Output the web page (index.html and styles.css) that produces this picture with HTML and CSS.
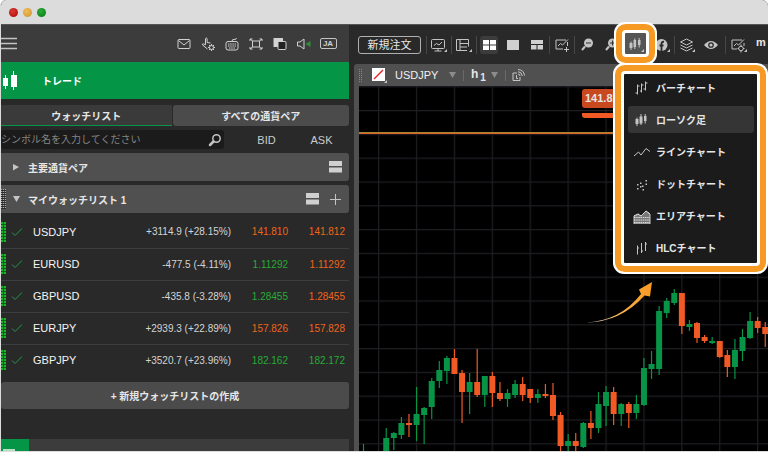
FILE: index.html
```html
<!DOCTYPE html>
<html lang="ja">
<head>
  <meta charset="UTF-8">
  <title>トレード</title>
  <meta name="viewport" content="width=device-width, initial-scale=1.0">
  <link rel="stylesheet" href="styles.css">
</head>
<body>
  <div class="window">
    <!-- Title bar -->
    <div class="titlebar">
      <span class="dot red"></span>
      <span class="dot yellow"></span>
      <span class="dot green"></span>
    </div>

    <div class="main">
      <!-- Left side: watchlist -->
      <aside class="sidebar">
        <div class="side-header">
          <button class="icon-btn menu-btn" aria-label="メニュー">
            <svg width="17" height="13" stroke="#c4c4c4" stroke-width="1.5"><path d="M0 1.5h16M0 6.5h16M0 11.5h16"/></svg>
          </button>
          <div class="side-tools">
            <button class="icon-btn" aria-label="メール">
              <svg width="16" height="16" viewBox="0 0 16 16"><rect x="2" y="3.5" width="12" height="9" rx="1"/><path d="M2.500 4.500L8 9l5.500-4.500"/></svg>
            </button>
            <button class="icon-btn" aria-label="ワンクリック設定">
              <svg width="16" height="16" viewBox="0 0 16 16"><path d="M7.500 13L2.500 9q-.6-1 .7-1.200l2.300 1V2.500q.8-1.300 1.600 0V6.500L10.500 7"/><circle cx="11.500" cy="11.500" r="2"/><path d="M11.500 8v1.500M11.500 13.500V15M8 11.500h1.500M13.500 11.500H15M9 9l1 1M13 13l1 1M14 9l-1 1M10 13l-1 1"/></svg>
            </button>
            <button class="icon-btn" aria-label="キーボード">
              <svg width="16" height="16" viewBox="0 0 16 16"><rect x="2" y="5.500" width="12" height="8.500" rx="2"/><path d="M8 5.500Q8 3 10 3.500T12.500 2"/><path d="M4 8h8M4 10h8M5 12h6" stroke-dasharray="1.500 .7"/></svg>
            </button>
            <button class="icon-btn" aria-label="全画面">
              <svg width="16" height="16" viewBox="0 0 16 16"><rect x="4.500" y="5" width="7" height="6"/><path d="M2 5V3h2.500M11.500 3H14v2M14 11v2h-2.500M4.500 13H2v-2M2 3l2.500 2M14 3l-2.500 2M2 13l2.500-2M14 13l-2.500-2"/></svg>
            </button>
            <button class="icon-btn" aria-label="テーマ">
              <svg width="16" height="16" viewBox="0 0 16 16"><rect x="2" y="2.500" width="8.500" height="8" fill="#d4d4d4"/><rect x="6" y="5.500" width="8" height="8" rx="1" fill="#222"/></svg>
            </button>
            <button class="icon-btn" aria-label="サウンド">
              <svg width="16" height="16" viewBox="0 0 16 16"><path d="M1.500 6v4H4l4 3V3L4 6z"/><path d="M14.500 5v6L9.500 8z" fill="#2f8f3c" stroke="none"/></svg>
            </button>
            <button class="icon-btn lang-btn" aria-label="言語"><span>JA</span></button>
          </div>
        </div>

        <div class="trade-bar">
          <svg width="16" height="20" fill="#fff"><path d="M2 7h2V4h1v3h2v8H5v3H4v-3H2zM10 4h2V0h1v4h3v12h-3v3h-1v-3h-2z"/></svg>
          <h1>トレード</h1>
        </div>

        <div class="tabs">
          <button class="tab active">ウォッチリスト</button>
          <button class="tab">すべての通貨ペア</button>
        </div>

        <div class="search-row">
          <label class="search">
            <input type="text" placeholder="シンボル名を入力してください" aria-label="シンボル検索">
            <svg width="14" height="14" fill="none" stroke="#d0d0d0"><circle cx="8.500" cy="5.500" r="3.700" stroke-width="1.500"/><path d="M5.500 8.500L2 12" stroke-width="2.500" stroke-linecap="round"/></svg>
          </label>
          <span class="col-title">BID</span>
          <span class="col-title">ASK</span>
        </div>

        <div class="group">
          <svg class="tri" width="8" height="8"><path d="M1 1l6 3-6 3.500z"/></svg>
          <span class="group-name">主要通貨ペア</span>
          <button class="icon-btn small" aria-label="表示切替"><svg width="13" height="12" class="solid"><path d="M0 0h13v5H0zM0 6.500h13v5H0z"/></svg></button>
        </div>
        <div class="group handle-row">
          <svg class="tri" width="8" height="8"><path d="M1 1h7L4.500 7z"/></svg>
          <span class="group-name">マイウォッチリスト 1</span>
          <button class="icon-btn small" aria-label="表示切替"><svg width="13" height="12" class="solid"><path d="M0 0h13v5H0zM0 6.500h13v5H0z"/></svg></button>
          <button class="icon-btn small" aria-label="追加"><svg width="11" height="11"><path d="M0 5.500h11M5.500 0v11"/></svg></button>
        </div>

        <table class="quotes">
          <tbody id="quotes"></tbody>
        </table>

        <button class="new-list">+ 新規ウォッチリストの作成</button>

        <div class="side-footer">
          <div class="footer-icon"><svg width="12" height="3"><path d="M0 2h12" stroke="#b8e0c4" stroke-width="2"/></svg></div>
        </div>
      </aside>

      <!-- Right side: toolbar and chart -->
      <section class="workspace">
        <div class="toolbar">
          <button class="order-btn">新規注文</button>
          <i class="sep"></i>
          <button class="icon-btn" aria-label="ワークスペース">
            <svg width="18" height="16" viewBox="0 0 18 16"><rect x="1.500" y="2.500" width="13" height="9" rx="1"/><path d="M4 8.500l2.500-2L9 8l3-3M8 11.500V14M4.500 14h7"/><path class="corner" d="M17 12v3h-3z"/></svg>
          </button>
          <i class="sep"></i>
          <button class="icon-btn" aria-label="レイアウト">
            <svg width="18" height="16" viewBox="0 0 18 16"><path d="M13.500 9.500v-7h-12v11H12M5 2.500v11M5 6.500h8.500M5 10h7"/><path class="corner" d="M17 12v3h-3z"/></svg>
          </button>
          <i class="sep"></i>
          <button class="icon-btn on" aria-label="4分割"><svg width="13" height="10" fill="#fff" class="solid"><path d="M0 0h6v4.500H0zM7 0h6v4.500H7zM0 5.500h6V10H0zM7 5.500h6V10H7z"/></svg></button>
          <button class="icon-btn" aria-label="1画面"><svg width="12" height="10" class="solid"><path d="M0 0h12v10H0z"/></svg></button>
          <button class="icon-btn" aria-label="3分割"><svg width="12" height="10" class="solid"><path d="M0 0h12v4H0zM0 5h5.500v4.500H0zM6.500 5H12v4.500H6.500z"/></svg></button>
          <i class="sep"></i>
          <button class="icon-btn" aria-label="チャート追加">
            <svg width="16" height="16" viewBox="0 0 16 16"><path d="M12 3H2v9h7M13.500 5v4M4 9l2.500-2.500L8.500 8l5.500-5.500M12.500 10v5M10 12.500h5"/></svg>
          </button>
          <i class="sep"></i>
          <button class="icon-btn" aria-label="縮小">
            <svg width="14" height="14"><circle cx="8.500" cy="5" r="4.500" fill="#c4c4c4" stroke="none"/><path d="M5 8.500L2 12" stroke-width="2"/><path d="M6 5h5" stroke="#333"/></svg>
          </button>
          <button class="icon-btn" aria-label="拡大">
            <svg width="14" height="14"><circle cx="8.500" cy="5" r="4.500" fill="#c4c4c4" stroke="none"/><path d="M5 8.500L2 12" stroke-width="2"/><path d="M6 5h5M8.500 2.500v5" stroke="#333"/></svg>
          </button>

          <!-- Chart type button with its open menu -->
          <div class="chart-type">
            <button class="icon-btn type-btn" aria-label="チャートタイプ">
              <svg width="18" height="16" viewBox="0 0 18 16"><path class="bars" d="M2.500 7h3v5h-3zM6.500 4h2.600v7H6.500zM11 4h2.500v5H11z"/><path d="M4 5.500V14M7.800 2.500V13M12.200 2V11.500"/><path class="corner" d="M17 13v3h-3z"/></svg>
            </button>
            <ul class="type-menu">
              <li><button><svg width="18" height="16" viewBox="0 0 18 16"><path d="M4.500 4.500v10M2.500 13h2M4.500 6h2M8.500 3.500v9M7 11h1.500M12.500 1.500v9M8.500 5h2M10.500 9h2M12.500 3h2"/></svg>バーチャート</button></li>
              <li><button class="selected"><svg width="18" height="16" viewBox="0 0 18 16"><path class="bars" d="M2.500 7h3v5h-3zM6.500 4.500h3v7h-3zM11 4h2.500v5H11z"/><path d="M4 5.500V14M8 2V13M12.200 2V11.500"/></svg>ローソク足</button></li>
              <li><button><svg width="18" height="16" viewBox="0 0 18 16"><path d="M1 12l4.500-4L8 11l5-6.500 4 3"/></svg>ラインチャート</button></li>
              <li><button><svg width="18" height="16" viewBox="0 0 18 16"><path class="bars" d="M4 8h1.500v1.500H4zM7 6.500h1.500V8H7zM9 9.500h1.500V11H9zM4 12h1.500v1.500H4zM7 10h1.500v1.500H7zM9.500 13H11v1.500H9.500zM12.500 7.500H14V9h-1.500zM12.500 4H14v1.500h-1.500z"/></svg>ドットチャート</button></li>
              <li><button><svg width="18" height="16" viewBox="0 0 18 16"><path fill="#777" d="M1 8l4-2 3 2 5-5 4 3v10H1z"/><path stroke="#ddd" d="M1 8l4-2 3 2 5-5 4 3M1 9.500h16M1 12h16M1 14.500h16" stroke-dasharray="1.500 .7"/></svg>エリアチャート</button></li>
              <li><button><svg width="18" height="16" viewBox="0 0 18 16"><path d="M4.500 5.500v9M8.500 3v10M12.500 2v9M4.500 8h1.500M8.500 11h1.500M12.500 4h1.500"/></svg>HLCチャート</button></li>
            </ul>
          </div>

          <button class="icon-btn" aria-label="Facebook">
            <svg width="16" height="16" viewBox="0 0 16 16"><circle cx="7.500" cy="8" r="6" fill="#c4c4c4" stroke="none"/><path d="M7.500 14V7q0-2.500 2.500-2.200M5.500 8.500h4" stroke="#2a2a2a" stroke-width="1.800"/><path class="corner" d="M16 12v3h-3z"/></svg>
          </button>
          <i class="sep"></i>
          <button class="icon-btn" aria-label="レイヤー">
            <svg width="18" height="16" viewBox="0 0 18 16"><path d="M8.500 2l6 3-6 3-6-3zM2.500 8l6 3 6-3M2.500 11l6 3 6-3"/><path class="corner" d="M17 12v3h-3z"/></svg>
          </button>
          <button class="icon-btn" aria-label="表示">
            <svg width="16" height="16" viewBox="0 0 16 16"><path d="M1 8q7-8 14 0-7 8-14 0z" fill="#c4c4c4" stroke="none"/><circle cx="8" cy="8" r="2.200" fill="#c4c4c4" stroke="#2a2a2a" stroke-width="1.300"/></svg>
          </button>
          <i class="sep wide"></i>
          <button class="icon-btn" aria-label="チャート設定">
            <svg width="18" height="16" viewBox="0 0 18 16"><path d="M12 3H2v9h5M4 9l2.500-2.500L8.500 8l5.500-5.500"/><circle cx="11" cy="11.500" r="2.300"/><path d="M11 7.500v2M11 13.500v2M7.500 11.500h1.500M13 11.500h1.500M14 6v3"/><path class="corner" d="M17 12v3h-3z"/></svg>
          </button>
          <button class="icon-btn m-btn" aria-label="分足">m</button>
        </div>

        <div class="chart-panel">
          <div class="chart-header">
            <span class="grip"></span>
            <button class="icon-btn color-btn" aria-label="リンクカラー"><svg width="15" height="15"><path d="M0 0h13v13H0z" fill="#fff" stroke="none"/><path d="M2 11l9-9" stroke="#e3262b" stroke-width="1.500"/><path class="corner" d="M15 12v3h-3z"/></svg></button>
            <select class="symbol-select" aria-label="シンボル"><option>USDJPY</option></select>
            <svg class="caret" width="7" height="7"><path d="M0 0h7L3.500 6z"/></svg>
            <i class="sep"></i>
            <button class="period-btn">h<sub>1</sub></button>
            <svg class="caret" width="7" height="7"><path d="M0 0h7L3.500 6z"/></svg>
            <i class="sep"></i>
            <button class="icon-btn" aria-label="共有"><svg width="13" height="14"><path d="M5 5H1v7.500h7V9M4.500 7v3.500h1.500M6 6q2 0 2 2M6 3.700q4 .3 4.300 4.300M6 1.500q6 .5 6.500 6"/></svg></button>
          </div>
          <div class="chart">
            <svg id="chart" width="100%" height="100%">
              <defs>
                <pattern id="grid" x="19" y="24" width="37.9" height="23.8" patternUnits="userSpaceOnUse">
                  <path d="M0 .5h38M.5 0v24" stroke="#1d1d22" stroke-width="1.500"/>
                </pattern>
              </defs>
              <rect width="100%" height="100%" fill="url(#grid)"/>
              <rect y="46" width="100%" height="1" fill="#a9852c"/>
              <rect y="47" width="100%" height="1" fill="#d9632a"/>
            </svg>
            <div class="price-tag"><span>141.810</span></div>
            <svg class="arrow" width="68" height="42">
              <defs>
                <linearGradient id="fade"><stop offset="0" stop-color="#fff"/><stop offset=".5" stop-color="#f8b04c"/><stop offset="1" stop-color="#f69a23"/></linearGradient>
              </defs>
              <path fill="url(#fade)" d="M0 40.500Q34 39 55 12L53 7.500 66 0 64 14.500 58.500 13.500Q35 40 0 40.500z"/>
            </svg>
          </div>
        </div>
      </section>
    </div>
  </div>

  <script src="app.js"></script>
</body>
</html>
```

FILE: styles.css
```css
/* ===== Base ===== */
* {
  margin: 0;
  padding: 0;
  box-sizing: border-box;
}
html, body {
  height: 100%;
  overflow: hidden;
}
body {
  background: #fff;
  color: #e6e6e6;
  font-family: "Liberation Sans", "Noto Sans CJK JP", sans-serif;
  font-size: 10px;
}
button, input, select {
  font: inherit;
  color: inherit;
  background: none;
  border: none;
  outline: none;
}
svg {
  display: block;
  fill: none;
  stroke: #c4c4c4;
}
svg.solid {
  fill: #d0d0d0;
  stroke: none;
}
.corner, .bars {
  fill: #c4c4c4;
  stroke: none;
}

/* ===== Window ===== */
.window {
  height: 100%;
  display: flex;
  flex-direction: column;
  border: 1px solid #dcdcdc;
  border-top: none;
  border-right: none;
  border-radius: 6px 6px 0 0;
  overflow: hidden;
  background: #292929;
}
.titlebar {
  flex: none;
  height: 25px;
  display: flex;
  align-items: center;
  gap: 5px;
  padding-left: 8px;
  background: #dcdcdc;
  border-bottom: 1px solid #555;
}
.dot {
  width: 9px;
  height: 9px;
  border-radius: 50%;
}
.dot.red { background: radial-gradient(circle at 40% 35%, #dd3a30, #a80a08); }
.dot.yellow { background: radial-gradient(circle at 40% 35%, #f1bc58, #cc942f); }
.dot.green { background: radial-gradient(circle at 40% 35%, #2cab35, #077a15); }
.main {
  flex: 1;
  display: flex;
  min-height: 0;
}

/* ===== Sidebar ===== */
.sidebar {
  width: 348px;
  flex: none;
  display: flex;
  flex-direction: column;
}
.sidebar > * {
  flex: none;
}
.icon-btn {
  width: 24px;
  height: 24px;
  display: flex;
  align-items: center;
  justify-content: center;
  flex: none;
}
.side-header {
  height: 37px;
  display: flex;
  align-items: center;
  justify-content: space-between;
  padding-right: 9px;
  background: #3c3c3c;
}
.menu-btn {
  width: 17px;
}
.side-tools {
  display: flex;
}
.side-tools svg {
  stroke: #d0d0d0;
}
.lang-btn span {
  width: 17px;
  height: 11px;
  border: 1px solid #c4c4c4;
  border-radius: 2px;
  color: #d0d0d0;
  font-size: 8px;
  font-weight: bold;
  line-height: 9px;
  text-align: center;
}
.trade-bar {
  height: 37px;
  display: flex;
  align-items: center;
  gap: 25px;
  background: #049547;
}
.trade-bar svg {
  stroke: none;
  fill: #fff;
}
.trade-bar h1 {
  font-size: 10px;
  font-weight: bold;
  color: #fff;
}
.tabs {
  display: flex;
  gap: 1px;
  margin-top: 6px;
}
.tab {
  flex: 1;
  height: 21px;
  background: #4b4b4b;
  border-radius: 3px;
  font-weight: bold;
}
.tab.active {
  flex: 0 0 49%;
  background: #3a3a3a;
  border-bottom: 1px solid #049547;
  border-radius: 0;
}
.search-row {
  height: 27px;
  display: flex;
  align-items: center;
}
.search {
  flex: 1;
  height: 19px;
  display: flex;
  align-items: center;
  padding-right: 2px;
  margin-right: 15px;
  background: #1b1b1b;
  border-radius: 3px;
}
.search input {
  flex: 1;
  min-width: 0;
}
.search input::placeholder {
  color: #858585;
}
.col-title {
  width: 55px;
  color: #ccc;
  font-size: 11px;
  text-align: center;
}

/* ===== Groups ===== */
.group {
  height: 28px;
  display: flex;
  align-items: center;
  padding: 0 7px 0 11px;
  margin-bottom: 4px;
  background: #505050;
  border-radius: 0 3px 3px 0;
  font-weight: bold;
}
.handle-row::before, .quotes .grab::before {
  content: "";
  display: block;
  width: 5px;
  height: 20px;
  background: repeating-linear-gradient(#0000 0 1px, #2b2b2b 1px 2px), repeating-linear-gradient(90deg, #aaa 0 1px, #505050 1px 2px);
}
.handle-row {
  padding-left: 0;
}
.handle-row .tri {
  margin-left: 6px;
}
.tri {
  fill: #c4c4c4;
  stroke: none;
}
.group-name {
  flex: 1;
  margin-left: 8px;
}
.icon-btn.small {
  width: 13px;
}
.icon-btn.small + .icon-btn.small {
  margin-left: 10px;
}

/* ===== Quotes ===== */
.quotes {
  width: 100%;
  border-collapse: collapse;
  margin-top: -1px;
}
.quotes td {
  height: 32px;
  border-bottom: 1px solid #3e3e3e;
  text-align: right;
}
.quotes tr:last-child td {
  border-bottom: none;
}
.quotes .grab {
  width: 10px;
}
.quotes .grab::before {
  background: repeating-linear-gradient(#0000 0 2px, #0b5c14 2px 3px), repeating-linear-gradient(90deg, #17b52a 0 2px, #0b5c14 2px 3px);
}
.quotes .check {
  width: 22px;
}
.quotes .check svg {
  stroke: #1f9a4b;
}
.quotes .symbol {
  text-align: left;
  font-size: 11px;
  color: #f4f4f4;
}
.quotes .change {
  color: #d4d4d4;
}
.quotes .price {
  width: 57px;
}
.quotes .price:last-child {
  width: 61px;
  padding-right: 4px;
}
.quotes .up { color: #27ab36; }
.quotes .down { color: #f0641a; }
.new-list {
  height: 27px;
  margin-top: 6px;
  background: #4b4b4b;
  border-radius: 3px;
  font-weight: bold;
}
.sidebar .side-footer {
  margin-top: auto;
  height: 12px;
  background: #3c3c3c;
}
.footer-icon {
  width: 28px;
  height: 12px;
  padding: 9px 0 0 2px;
  background: #049547;
}

/* ===== Workspace ===== */
.workspace {
  flex: 1;
  min-width: 0;
  display: flex;
  flex-direction: column;
  padding-left: 5px;
}
.toolbar {
  height: 39px;
  flex: none;
  display: flex;
  align-items: center;
  padding-left: 4px;
}
.order-btn {
  flex: none;
  width: 63px;
  height: 18px;
  margin-right: 5px;
  border: 1px solid #b0b0b0;
  border-radius: 3px;
  font-size: 11px;
  line-height: 16px;
}
.sep {
  flex: none;
  width: 1px;
  height: 18px;
  background: #474747;
}
.sep.wide {
  margin: 0 1px 0 2px;
}
.icon-btn.on {
  height: 18px;
  width: 18px;
  margin: 0 3px;
  background: #3c3c3c;
  border-radius: 3px;
}
.on svg.solid {
  fill: #fff;
}
.m-btn {
  width: 20px;
  padding-bottom: 5px;
  font-weight: bold;
  font-size: 11px;
}

/* ===== Chart type menu ===== */
.chart-type {
  position: relative;
  flex: none;
  width: 27px;
  height: 100%;
  z-index: 2;
}
.type-btn {
  position: absolute;
  top: 5px;
  left: -1px;
  width: 27px;
  height: 27px;
  background: #555;
}
.type-btn, .type-menu {
  border: 3px solid #fff;
  border-radius: 4px;
  box-shadow: 0 0 0 6px #f69a23, 0 0 0 8px #fff;
}
.type-menu {
  position: absolute;
  top: 46px;
  left: -2px;
  width: 139px;
  padding: 0 3px 0 4px;
  background: #1b1b1b;
  list-style: none;
}
.type-menu li {
  height: 32px;
}
.type-menu li:last-child {
  height: 29px;
}
.type-menu button {
  display: flex;
  align-items: center;
  gap: 5px;
  width: 100%;
  height: 27px;
  padding-left: 5px;
  border-radius: 3px;
  font-weight: bold;
}
.type-menu .selected {
  background: #353535;
}

/* ===== Chart ===== */
.chart-panel {
  flex: 1;
  min-height: 0;
  display: flex;
  flex-direction: column;
  padding-left: 5px;
  background: #505050;
  border-radius: 3px 0 0 0;
}
.chart-header {
  height: 22px;
  flex: none;
  display: flex;
  align-items: center;
}
.grip {
  width: 4px;
  height: 13px;
  margin-right: 4px;
  background: repeating-linear-gradient(#0000 0 1px, #505050 1px 2px), repeating-linear-gradient(90deg, #888 0 1px, #505050 1px 2px);
}
.symbol-select {
  width: 54px;
  margin-left: 4px;
  appearance: none;
  font-size: 11px;
  color: #f0f0f0;
}
.caret {
  fill: #8c8c8c;
  stroke: none;
}
.chart-header .sep {
  margin-left: 7px;
  height: 11px;
  background: #6a6a6a;
}
.period-btn {
  width: 27px;
  padding-left: 7px;
  text-align: left;
  font-size: 12px;
  font-weight: bold;
}
.period-btn sub {
  margin-left: 2px;
  font-size: 10px;
}
.chart {
  position: relative;
  flex: 1;
  min-height: 0;
  background: #000;
  overflow: hidden;
}
.chart svg {
  stroke: none;
}
.price-tag {
  position: absolute;
  top: 3px;
  left: 223px;
  width: 60px;
  border-bottom: 5px solid #f15a24;
  border-radius: 0 0 3px 3px;
}
.price-tag span {
  display: block;
  width: 54px;
  height: 19px;
  margin-bottom: 5px;
  padding-left: 3px;
  background: #c8491f;
  border-radius: 3px;
  font-size: 11px;
  font-weight: bold;
  line-height: 19px;
}
.arrow {
  position: absolute;
  top: 196px;
  left: 227px;
}
```

FILE: app.js
```javascript
// Watchlist rows: symbol, change, bid, bid class, ask, ask class
const quotes = [
  ["USDJPY", "+3114.9 (+28.15%)", "141.810", "down", "141.812", "down"],
  ["EURUSD", "-477.5 (-4.11%)", "1.11292", "up", "1.11292", "down"],
  ["GBPUSD", "-435.8 (-3.28%)", "1.28455", "up", "1.28455", "down"],
  ["EURJPY", "+2939.3 (+22.89%)", "157.826", "down", "157.828", "down"],
  ["GBPJPY", "+3520.7 (+23.96%)", "182.162", "up", "182.172", "up"]
];

document.getElementById("quotes").innerHTML = quotes.map(q => `
  <tr>
    <td class="grab"></td>
    <td class="check"><svg width="12" height="10"><path d="M1 5.500l3 3 7-7"/></svg></td>
    <td class="symbol">${q[0]}</td>
    <td class="change">${q[1]}</td>
    <td class="price ${q[3]}">${q[2]}</td>
    <td class="price ${q[5]}">${q[4]}</td>
  </tr>`).join("");

// Candles: slot, high, body top, body bottom, low, rising (1) or falling (0)
const candles = [
  [0, 358, 370, 376, 380, 1], [3, 342, 352, 376, 380, 1], [4, 346, 347, 352, 364, 1],
  [5, 331, 337, 349, 353, 1], [6, 328, 337, 339, 351, 0], [7, 301, 328, 339, 355, 1],
  [8, 321, 322, 329, 358, 1], [9, 292, 295, 321, 333, 1], [10, 275, 284, 295, 302, 1],
  [11, 270, 272, 285, 298, 1], [12, 263, 272, 288, 288, 0], [13, 284, 287, 306, 337, 0],
  [14, 287, 296, 306, 328, 1], [15, 263, 296, 309, 311, 0], [16, 290, 290, 309, 321, 1],
  [17, 286, 290, 307, 321, 0], [18, 296, 307, 313, 315, 0], [19, 303, 307, 313, 321, 1],
  [20, 294, 298, 309, 312, 1], [21, 291, 298, 309, 315, 0], [22, 303, 303, 312, 317, 0],
  [23, 303, 308, 312, 317, 1], [24, 298, 308, 310, 312, 0], [25, 297, 309, 330, 334, 0],
  [26, 326, 329, 360, 366, 0], [27, 348, 355, 360, 366, 1], [28, 347, 355, 360, 366, 0],
  [29, 336, 337, 361, 362, 1], [30, 325, 337, 342, 353, 0], [31, 306, 318, 342, 347, 1],
  [32, 300, 306, 320, 340, 1], [33, 301, 306, 328, 339, 0], [34, 317, 318, 328, 340, 1],
  [35, 316, 318, 327, 342, 0], [36, 309, 318, 327, 333, 1], [37, 272, 282, 319, 320, 1],
  [38, 265, 278, 283, 293, 1], [39, 220, 225, 283, 289, 1], [40, 212, 215, 227, 232, 1],
  [41, 203, 207, 217, 219, 1], [42, 207, 207, 240, 248, 0], [43, 234, 238, 241, 245, 1],
  [44, 236, 237, 252, 257, 0], [45, 249, 251, 255, 257, 0], [46, 251, 255, 257, 258, 1],
  [47, 255, 255, 271, 272, 0], [48, 264, 269, 281, 291, 0], [49, 253, 264, 281, 293, 1],
  [50, 243, 251, 265, 275, 1], [51, 226, 235, 252, 253, 1], [52, 231, 235, 242, 247, 0],
  [53, 236, 241, 248, 261, 0]
];

const step = 7.58;
let shapes = "";
candles.forEach(([slot, high, top, bottom, low, rising]) => {
  const x = 4.5 + slot * step;
  const color = rising ? "#079447" : "#f15a24";
  shapes += `<rect x="${x - 0.6}" y="${high}" width="1.2" height="${low - high}" fill="${color}"/>`;
  shapes += `<rect x="${x - 3}" y="${top}" width="6" height="${bottom - top}" fill="${color}"/>`;
});
document.getElementById("chart").insertAdjacentHTML("beforeend", shapes);
```
